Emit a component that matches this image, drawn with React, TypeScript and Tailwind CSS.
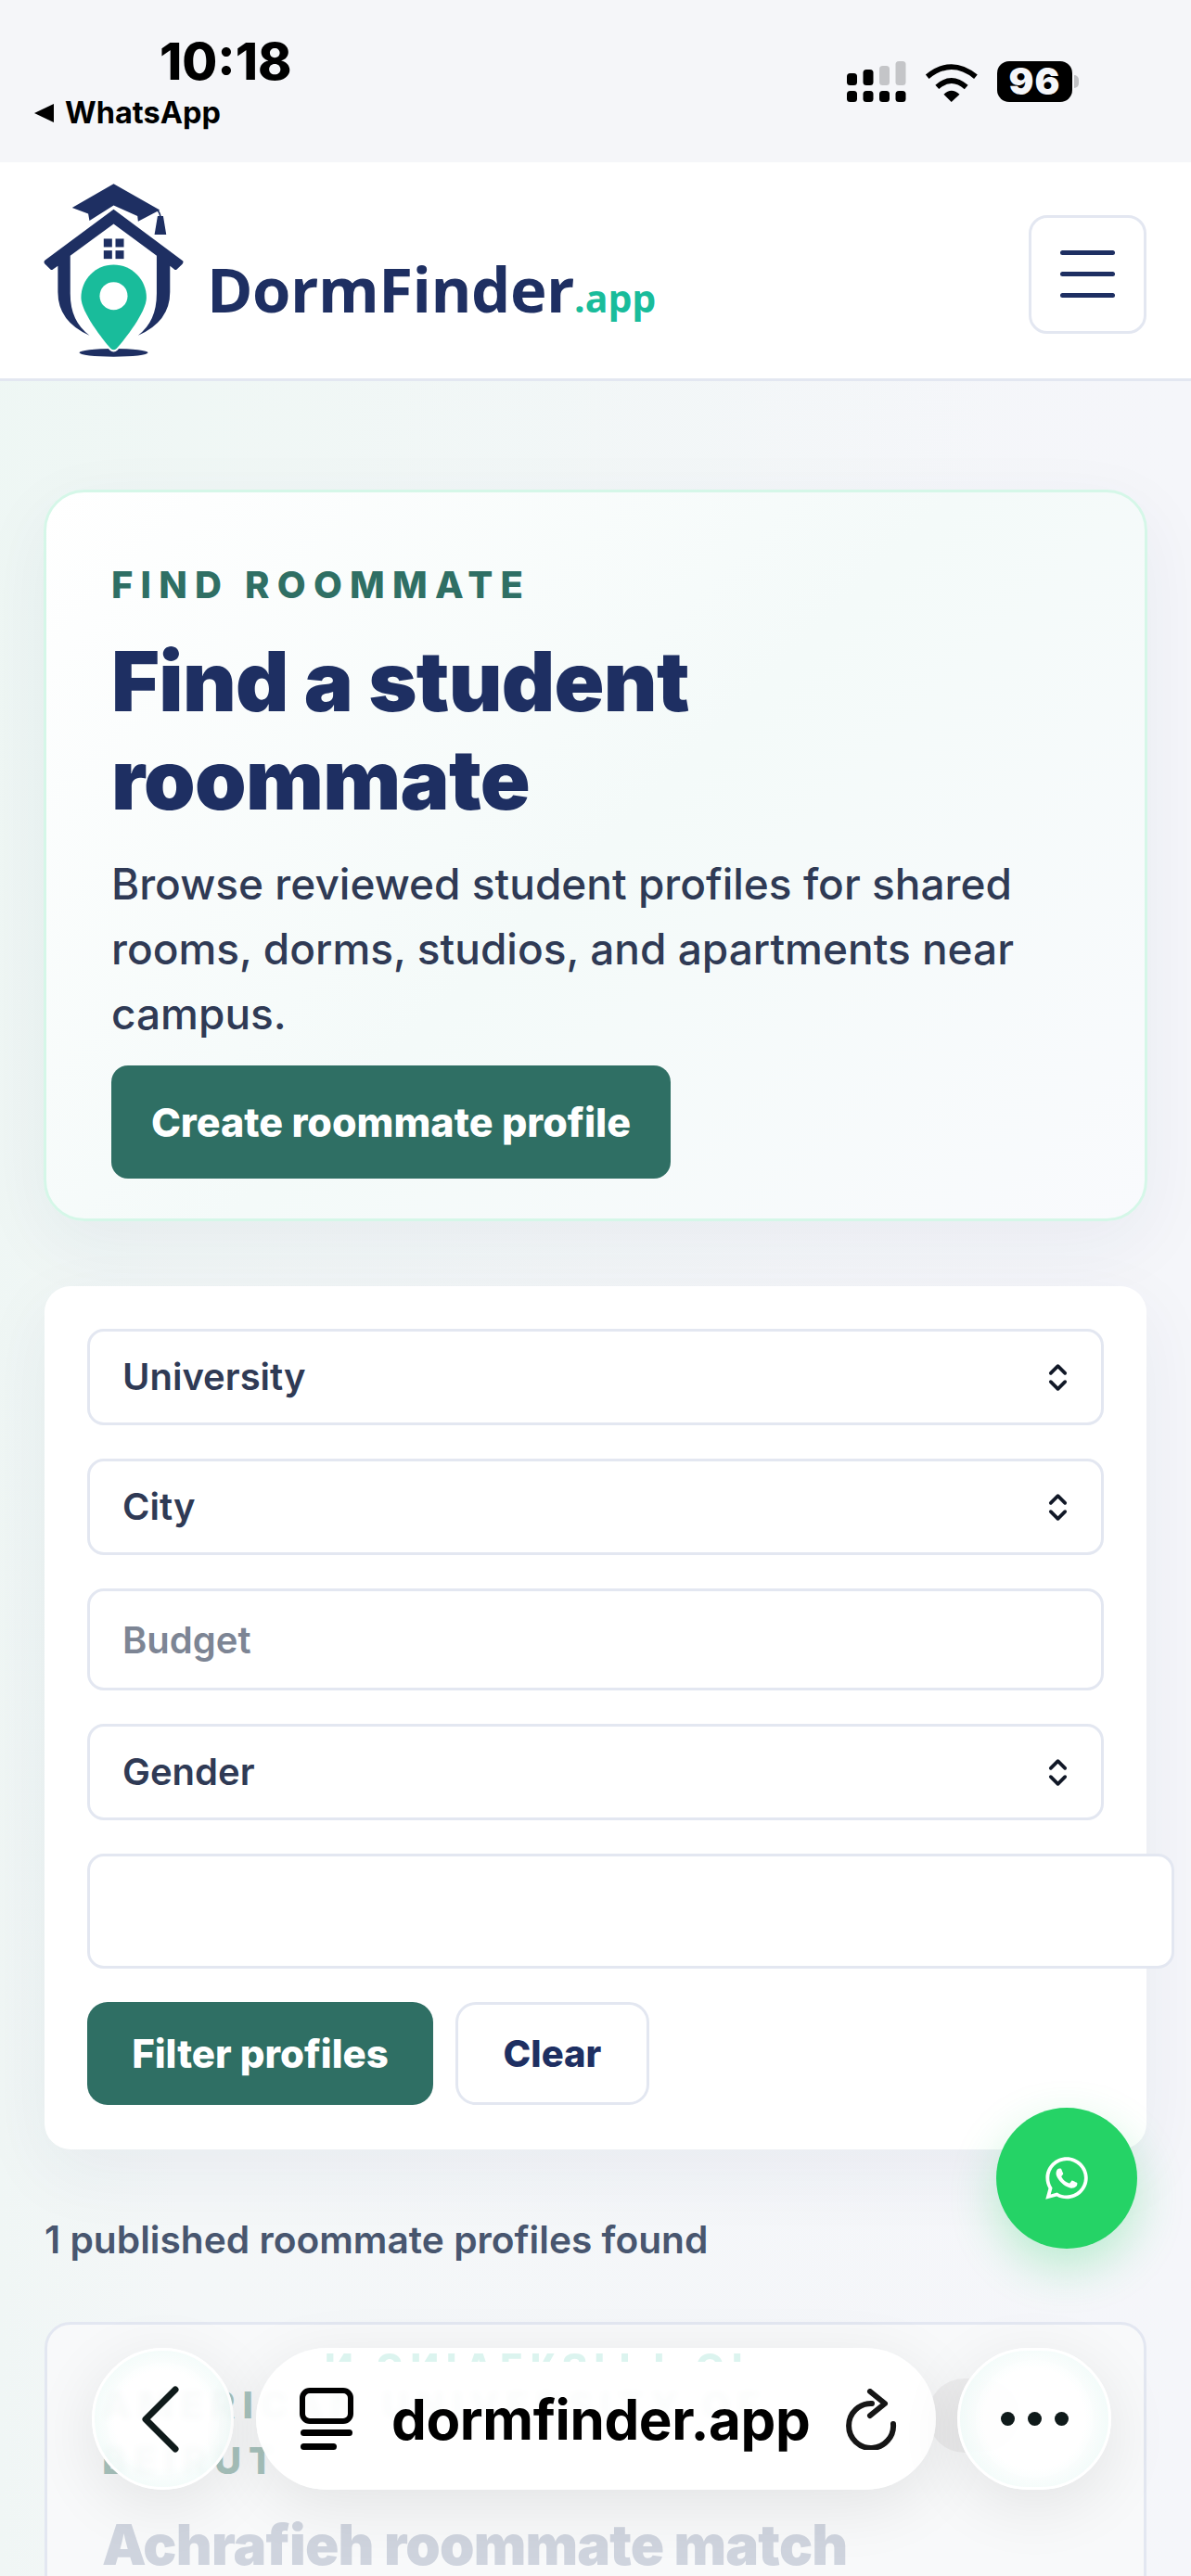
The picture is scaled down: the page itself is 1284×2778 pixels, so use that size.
import { ChevronsUpDown } from 'lucide-react';
import { FaWhatsapp } from 'react-icons/fa';

const inter = { fontFamily: 'Inter, "Liberation Sans", sans-serif' };

function Logo() {
  return (
    <svg viewBox="140 85 455 560" className="w-[152px] h-[187px] shrink-0">
      <path fill="#1e2f62" d="M366 86L515 170L445 207L443 190L366 155L288 205L284 182L232 163Z" />
      <path fill="none" stroke="#1e2f62" strokeWidth="5" d="M486 174Q512 160 517 192" />
      <path fill="#1e2f62" d="M508 190L526 190L536 250L498 250Z" />
      <path
        fill="#1e2f62"
        d="M366 168L590 335Q592 340 588 345L570 362Q566 365 562 362L548 351L548 435Q548 530 445 575Q505 530 505 440L505 318L366 215L226 318L226 440Q226 530 288 575Q186 530 186 435L186 351L170 362Q166 365 162 362L143 343Q139 337 145 332Z"
      />
      <rect x="334" y="263" width="27" height="27" fill="#1e2f62" />
      <rect x="372" y="263" width="27" height="27" fill="#1e2f62" />
      <rect x="334" y="301" width="27" height="27" fill="#1e2f62" />
      <rect x="372" y="301" width="27" height="27" fill="#1e2f62" />
      <ellipse cx="366" cy="631" rx="111" ry="13" fill="#1e2f62" />
      <path
        fill="#19bc9b"
        stroke="#fff"
        strokeWidth="12"
        paintOrder="stroke"
        d="M366 347C425 347 472 395 472 453C472 500 400 590 375 618Q366 626 357 618C332 590 261 500 261 453C261 395 307 347 366 347Z"
      />
      <circle cx="366" cy="448" r="45" fill="#fff" />
    </svg>
  );
}

function StatusIcons() {
  return (
    <div className="flex items-center gap-[20px] pr-[121px]">
      <svg viewBox="0 0 64 44" className="w-[64px] h-[44px]">
        <rect x="0" y="13" width="11" height="13" rx="3.5" fill="#000" />
        <rect x="17.5" y="9" width="11" height="17" rx="3.5" fill="#000" />
        <rect x="35" y="5" width="11" height="21" rx="3.5" fill="#c4c5c8" />
        <rect x="52.5" y="0" width="11" height="26" rx="3.5" fill="#c4c5c8" />
        <rect x="0" y="32" width="11" height="12" rx="3.5" fill="#000" />
        <rect x="17.5" y="32" width="11" height="12" rx="3.5" fill="#000" />
        <rect x="35" y="32" width="11" height="12" rx="3.5" fill="#000" />
        <rect x="52.5" y="32" width="11" height="12" rx="3.5" fill="#000" />
      </svg>
      <svg viewBox="410 80 170 126" className="w-[58px] h-[43px]">
        <path d="M418 126Q494 64 571 126" fill="none" stroke="#000" strokeWidth="17" />
        <path d="M449 159Q494 118 541 159" fill="none" stroke="#000" strokeWidth="17" />
        <path d="M470 182Q494 158 520 182L494 206Z" fill="#000" />
      </svg>
      <div className="relative flex items-center">
        <div
          className="w-[81px] h-[44px] rounded-[13px] bg-black text-[#f5f6f9] flex items-center justify-center text-[40px] font-black tracking-[1px]"
          style={inter}
        >
          96
        </div>
        <div className="w-[5px] h-[14px] ml-[2px] rounded-r-full bg-[#c0c1c4]" />
      </div>
    </div>
  );
}

function Select({ label }: { label: string }) {
  return (
    <div className="h-[104px] border-[3px] border-[#e3e7f1] rounded-[18px] bg-white flex items-center justify-between pl-[35px] pr-[28px] text-[40px] font-semibold text-[#2f3a55]">
      <span>{label}</span>
      <ChevronsUpDown className="w-[37px] h-[37px] text-[#111827]" strokeWidth={2.4} />
    </div>
  );
}

export default function App() {
  return (
    <div
      className="relative w-[1284px] h-[2778px] overflow-hidden bg-[radial-gradient(ellipse_at_top_left,#eef7f4,transparent_60%),linear-gradient(90deg,#f0f6f5_0%,#f4f7f8_15%,#f5f6fa_100%)]"
      style={inter}
    >
      {/* iOS status bar */}
      <div className="h-[175px] bg-[#f5f6f9] flex justify-between items-start">
        <div className="pl-[37px] pt-[35px]">
          <div className="pl-[135px] text-[55px] leading-[62px] font-extrabold text-black">10:18</div>
          <div className="flex items-center gap-[12px] mt-[5px]">
            <div className="w-0 h-0 border-y-[10px] border-y-transparent border-r-[21px] border-r-black" />
            <span className="text-[32.5px] leading-[40px] font-bold text-black">WhatsApp</span>
          </div>
        </div>
        <div className="pt-[66px]">
          <StatusIcons />
        </div>
      </div>

      {/* Site header */}
      <header className="h-[236px] bg-white border-b-[3px] border-[#e3e7f1] flex items-center justify-between pl-[47px] pr-[48px]">
        <div className="flex items-end">
          <Logo />
          <div
            className="flex items-baseline ml-[24px] mb-[34px]"
            style={{ fontFamily: '"Open Sans", sans-serif' }}
          >
            <span className="text-[67px] leading-[80px] font-bold text-[#1e2f62] tracking-[-0.5px]">DormFinder</span>
            <span className="text-[41px] leading-[50px] font-bold text-[#19bc9b]">.app</span>
          </div>
        </div>
        <button className="mt-[8px] w-[127px] h-[128px] border-[3px] border-[#e3e7f1] rounded-[20px] flex flex-col items-center justify-center gap-[18px]">
          <span className="w-[59px] h-[5px] rounded-full bg-[#1e2f62]" />
          <span className="w-[59px] h-[5px] rounded-full bg-[#1e2f62]" />
          <span className="w-[59px] h-[5px] rounded-full bg-[#1e2f62]" />
        </button>
      </header>

      <main className="px-[48px] pt-[117px]">
        {/* Hero */}
        <section className="h-[789px] -mx-[1px] rounded-[44px] border-[3px] border-[#d5f7e8] bg-[linear-gradient(135deg,#ffffff_0%,#f4faf9_50%,#f9fafd_100%)] shadow-[0_24px_80px_rgba(30,47,98,0.06)] pl-[70px] pr-[60px] pt-[75px]">
          <p className="text-[40px] leading-[50px] font-extrabold tracking-[0.205em] text-[#2f6f64]">FIND ROOMMATE</p>
          <h1 className="mt-[26px] text-[89px] leading-[106px] font-black tracking-[-0.7px] text-[#1e2f62]">
            Find a student
            <br />
            roommate
          </h1>
          <p className="mt-[24px] text-[46px] leading-[70px] font-medium text-[#2f3a55]">
            Browse reviewed student profiles for shared rooms, dorms, studios, and apartments near campus.
          </p>
          <button className="mt-[21px] w-[603px] h-[122px] rounded-[18px] bg-[#2f6f64] text-white text-[43px] font-extrabold">
            Create roommate profile
          </button>
        </section>

        {/* Filters */}
        <section className="mt-[70px] h-[931px] rounded-[28px] bg-white shadow-[0_24px_80px_rgba(30,47,98,0.06)] px-[46px] pt-[46px]">
          <div className="flex flex-col gap-[36px] w-[1096px]">
            <Select label="University" />
            <Select label="City" />
            <input
              placeholder="Budget"
              className="h-[110px] border-[3px] border-[#e3e7f1] rounded-[18px] bg-white pl-[35px] text-[40px] font-semibold text-[#2f3a55] placeholder:text-[#7d8594]"
            />
            <Select label="Gender" />
            <div className="w-[1172px] h-[124px] shrink-0 border-[3px] border-[#e3e7f1] rounded-[18px] bg-white" />
          </div>
          <div className="flex gap-[24px] mt-[36px]">
            <button className="w-[373px] h-[111px] rounded-[22px] bg-[#2f6f64] text-white text-[42px] font-extrabold">
              Filter profiles
            </button>
            <button className="w-[209px] h-[111px] rounded-[22px] border-[3px] border-[#e3e7f1] bg-white text-[#1e2f62] text-[40px] font-extrabold">
              Clear
            </button>
          </div>
        </section>

        <p className="mt-[73px] text-[40.7px] leading-[50px] font-semibold text-[#48566f]">
          1 published roommate profiles found
        </p>

        {/* First result, mostly under the browser bar */}
        <article className="mt-[63px] h-[400px] rounded-[28px] border-[3px] border-[#e3e7f1] bg-[#f8f9fa] pl-[59px] pt-[57px]">
          <p className="text-[40px] leading-[60px] font-extrabold tracking-[0.2em] text-[#a8c3bd] w-[800px]">
            AMERICAN UNIVERSITY OF BEIRUT
          </p>
          <h2 className="mt-[24px] text-[60px] leading-[72px] font-black text-[#cfd4de] tracking-[-0.8px] whitespace-nowrap">
            Achrafieh roommate match
          </h2>
        </article>
      </main>

      {/* WhatsApp button */}
      <div className="absolute left-[1074px] top-[2273px] w-[152px] h-[152px] rounded-full bg-[#25d366] flex items-center justify-center shadow-[0_20px_50px_rgba(37,211,102,0.28)]">
        <FaWhatsapp className="w-[52px] h-[52px] text-white" />
      </div>

      {/* Safari bottom bar */}
      <div className="absolute left-[1000px] top-[2565px] w-[100px] h-[80px] rounded-full bg-[#eeeeef]" />
      <div className="absolute left-[99px] top-[2532px] flex">
        <div className="w-[153px] h-[153px] rounded-full border-[3px] border-white bg-[radial-gradient(circle,rgba(255,255,255,0.93)_50%,rgba(226,246,242,0.94)_100%)] backdrop-blur-[3px] shadow-[0_16px_70px_rgba(0,0,0,0.09)] flex items-center justify-center">
          <svg viewBox="0 0 44 72" className="w-[44px] h-[72px] -ml-[6px]">
            <path d="M38 4L6 36L38 68" fill="none" stroke="#0f1a1a" strokeWidth="7" strokeLinecap="round" strokeLinejoin="round" />
          </svg>
        </div>
        <div className="relative ml-[24px] w-[733px] h-[153px] rounded-full overflow-hidden bg-white/95 backdrop-blur-[3px] shadow-[0_16px_70px_rgba(0,0,0,0.09)] flex items-center pl-[47px]">
          {/* refracted copy of the text behind the glass */}
          <div aria-hidden className="absolute left-[74px] top-[3px] h-[12px] overflow-hidden">
            <div className="-scale-y-100 text-[40px] leading-[34px] font-extrabold tracking-[0.2em] text-[#dcf4ef] whitespace-nowrap">
              N UNIVERSITY OF
            </div>
          </div>
          <svg viewBox="0 0 58 68" className="w-[58px] h-[68px] shrink-0">
            <rect x="3" y="3" width="52" height="33" rx="8" fill="none" stroke="#000" strokeWidth="6" />
            <rect x="1" y="45" width="56" height="7" rx="3.5" fill="#000" />
            <rect x="1" y="60" width="39" height="7" rx="3.5" fill="#000" />
          </svg>
          <span className="ml-[41px] text-[60px] leading-[72px] font-bold text-black tracking-[-0.4px]">
            dormfinder.app
          </span>
          <svg viewBox="0 0 56 66" className="ml-[38px] w-[56px] h-[66px] shrink-0">
            <path d="M52 38A24 24 0 1 1 29 16" fill="none" stroke="#161616" strokeWidth="6" strokeLinecap="round" />
            <path d="M27 3L43 16L27 29" fill="none" stroke="#161616" strokeWidth="6" strokeLinecap="round" strokeLinejoin="round" />
          </svg>
        </div>
        <div className="ml-[23px] w-[166px] h-[153px] rounded-full border-[3px] border-white bg-[radial-gradient(circle,rgba(255,255,255,0.93)_50%,rgba(226,246,242,0.94)_100%)] backdrop-blur-[3px] shadow-[0_16px_70px_rgba(0,0,0,0.09)] flex items-center justify-center gap-[14px]">
          <span className="w-[15px] h-[15px] rounded-full bg-[#0f1a1a]" />
          <span className="w-[15px] h-[15px] rounded-full bg-[#0f1a1a]" />
          <span className="w-[15px] h-[15px] rounded-full bg-[#0f1a1a]" />
        </div>
      </div>
    </div>
  );
}
